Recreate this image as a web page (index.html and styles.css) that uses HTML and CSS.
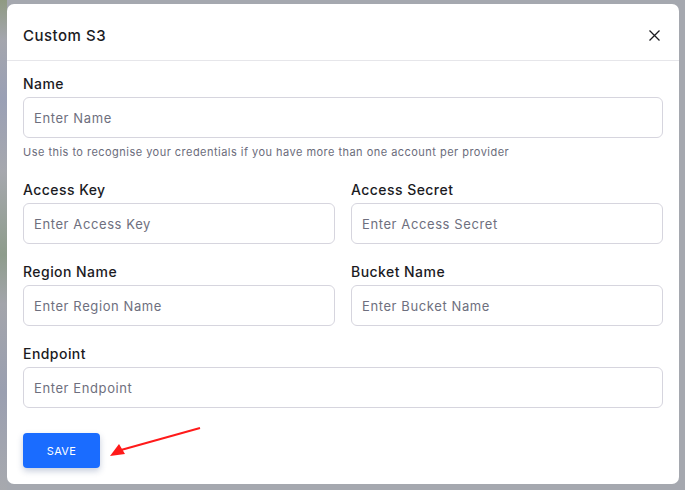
FILE: index.html
```html
<!DOCTYPE html>
<html>
<head>
<meta charset="utf-8">
<link rel="stylesheet" href="styles.css">
</head>
<body>
<div class="backdrop">
  <div class="modal">
    <div class="modal-header">
      <h2 class="title">Custom S3</h2>
      <button class="close" aria-label="Close">
        <svg width="11" height="11" viewBox="0 0 11 11"><path d="M0.5 0.5L10.5 10.5M10.5 0.5L0.5 10.5" stroke="#1b1b1f" stroke-width="1.3" fill="none"/></svg>
      </button>
    </div>
    <form class="modal-body">
      <div class="field">
        <label class="label">Name</label>
        <input class="input" placeholder="Enter Name">
        <div class="help">Use this to recognise your credentials if you have more than one account per provider</div>
      </div>
      <div class="row">
        <div class="field">
          <label class="label">Access Key</label>
          <input class="input" placeholder="Enter Access Key">
        </div>
        <div class="field">
          <label class="label">Access Secret</label>
          <input class="input" placeholder="Enter Access Secret">
        </div>
      </div>
      <div class="row">
        <div class="field">
          <label class="label">Region Name</label>
          <input class="input" placeholder="Enter Region Name">
        </div>
        <div class="field">
          <label class="label">Bucket Name</label>
          <input class="input" placeholder="Enter Bucket Name">
        </div>
      </div>
      <div class="field">
        <label class="label">Endpoint</label>
        <input class="input" placeholder="Enter Endpoint">
      </div>
      <div class="actions">
        <button type="button" class="save">SAVE</button>
      </div>
    </form>
    <svg class="arrow" width="100" height="40" viewBox="0 0 100 40">
      <path d="M93 3 L14 25" stroke="#ff1a1a" stroke-width="2" fill="none"/>
      <path d="M3 31 L12 19 L18 29 Z" fill="#ff1a1a"/>
    </svg>
  </div>
</div>
</body>
</html>
```
FILE: styles.css
```css
* { box-sizing: border-box; }
html, body { margin: 0; padding: 0; }
body {
  width: 685px;
  height: 490px;
  overflow: hidden;
  font-family: Inter, "Noto Sans", sans-serif;
  background: #a5a8af;
}
.backdrop {
  width: 685px;
  height: 490px;
  padding: 4px 6px 6px 7px;
  background:
    linear-gradient(180deg, #8f9a82 0%, #a4a6ad 8%, #9aa0b5 20%, #a6a8ae 35%, #8e9c8c 52%, #a3a5ab 62%, #9a9fb0 80%, #a7a9ae 100%) left top / 7px 100% no-repeat,
    #a5a8af;
}
.modal {
  position: relative;
  width: 672px;
  height: 480px;
  background: #fff;
  border-radius: 7px;
}
.modal-header {
  height: 57px;
  border-bottom: 1px solid #e6e6ea;
  display: flex;
  align-items: center;
  justify-content: space-between;
  padding: 6px 19px 0 16px;
}
.title {
  margin: 0;
  font-size: 15px;
  font-weight: 500;
  letter-spacing: 0.5px;
  color: #1b1b1f;
}
.close {
  border: 0;
  background: none;
  padding: 0;
  width: 11px;
  height: 11px;
  display: flex;
}
.modal-body {
  padding: 14px 16px 0 16px;
  display: flex;
  flex-direction: column;
  gap: 19px;
}
.row {
  display: grid;
  grid-template-columns: 1fr 1fr;
  gap: 16px;
}
.field {
  display: flex;
  flex-direction: column;
}
.label {
  font-size: 14px;
  font-weight: 500;
  letter-spacing: 0.45px;
  color: #1b1b1f;
  line-height: 18px;
  margin-bottom: 4px;
}
.input {
  height: 41px;
  border: 1px solid #d6d5de;
  border-radius: 6px;
  padding: 0 10px;
  font-family: inherit;
  font-size: 13px;
  letter-spacing: 0.6px;
  color: #1b1b1f;
  outline: none;
}
.input::placeholder { color: #6e6f7e; }
.help {
  margin-top: 8px;
  margin-bottom: 4px;
  font-size: 11px;
  letter-spacing: 0.47px;
  color: #6b6c7b;
  line-height: 12px;
}
.actions {
  padding-top: 6px;
}
.save {
  width: 77px;
  height: 35px;
  border: 0;
  border-radius: 4px;
  background: #1a6cff;
  color: #fff;
  font-family: Inter, sans-serif;
  font-size: 11px;
  font-weight: 400;
  letter-spacing: 0.3px;
  box-shadow: 0 3px 6px rgba(30, 60, 120, 0.25);
}
.arrow {
  position: absolute;
  left: 100px;
  top: 421px;
}
```
